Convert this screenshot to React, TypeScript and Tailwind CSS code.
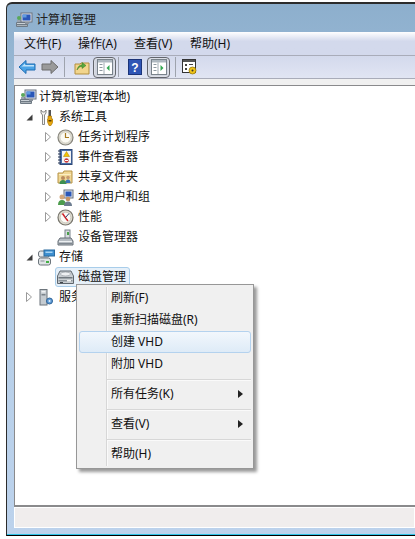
import type { ReactNode } from 'react';

const Computer = () => (
  <svg width="17" height="16" viewBox="0 0 17 16">
    <rect x="1" y="8" width="9" height="3" fill="#9aa3ad" />
    <rect x="0" y="10" width="12" height="5" rx="1" fill="#6f7a84" />
    <rect x="1" y="11" width="10" height="1" fill="#c9d0d6" />
    <rect x="1" y="13" width="10" height="1" fill="#aab2b9" />
    <rect x="5" y="1" width="11" height="9" fill="#dfe4ea" stroke="#6a7380" />
    <rect x="6.5" y="2.5" width="8" height="6" fill="#2a57b8" />
    <rect x="6.5" y="2.5" width="4" height="3" fill="#5f9be0" />
    <rect x="9" y="10" width="4" height="2" fill="#8b939c" />
    <circle cx="3" cy="6" r="2" fill="#5aa85a" />
  </svg>
);

const Tools = () => (
  <svg width="14" height="17" viewBox="0 0 14 17">
    <path d="M2 1v3l1.500 2v9.500h2V6L7 4V1L5.500 3h-2z" fill="#f4f4f4" stroke="#6c6c6c" strokeWidth="0.8" />
    <rect x="9.500" y="1" width="2.500" height="6" fill="#555" />
    <path d="M9 7h3.500v3H14v3l-2 3.500h-2L8.500 13v-3H9z" fill="#e8a80f" stroke="#a36f00" strokeWidth="0.6" />
    <rect x="9.500" y="11" width="3" height="1.500" fill="#5b3d00" />
  </svg>
);

const Clock = () => (
  <svg width="17" height="17" viewBox="0 0 17 17">
    <circle cx="8.500" cy="8.500" r="7.500" fill="#dcdad0" stroke="#87857c" strokeWidth="1.200" />
    <circle cx="8.500" cy="8.500" r="5.500" fill="#fbfaf3" stroke="#c4c1b3" strokeWidth="0.600" />
    <path d="M8.500 4v4.500H12" fill="none" stroke="#a87b20" strokeWidth="1.200" />
  </svg>
);

const EventLog = () => (
  <svg width="15" height="16" viewBox="0 0 15 16">
    <rect x="2" y="0.500" width="12" height="15" fill="#4a6fa8" stroke="#2e4876" />
    <rect x="4" y="2" width="9" height="12" fill="#f4f4f4" />
    <path d="M0 2h3M0 5h3M0 8h3M0 11h3M0 14h3" stroke="#20304f" strokeWidth="1.200" />
    <path d="M8.500 2.500l3 5h-6z" fill="#f2c200" stroke="#a77f00" strokeWidth="0.500" />
    <circle cx="8.500" cy="11.500" r="2.200" fill="#c8383a" />
    <rect x="7" y="11" width="3" height="1" fill="#fff" />
  </svg>
);

const SharedFolder = () => (
  <svg width="17" height="16" viewBox="0 0 17 16">
    <path d="M1 4h5l1-2h8v12H1z" fill="#f0d795" stroke="#b69347" />
    <rect x="2" y="5" width="12" height="1" fill="#fbeec4" />
    <circle cx="6" cy="9" r="2" fill="#b98a5c" />
    <path d="M2.500 15c0-3 1.500-4 3.500-4s3.500 1 3.500 4z" fill="#3d8f4f" />
    <circle cx="11" cy="8.500" r="1.800" fill="#c89a70" />
    <path d="M8.500 14c0-2.500 1-3.500 2.500-3.500s2.500 1 2.500 3.500z" fill="#3f74b8" />
  </svg>
);

const Users = () => (
  <svg width="17" height="17" viewBox="0 0 17 17">
    <rect x="7" y="1" width="9" height="8" fill="#dfe4ea" stroke="#6a7380" />
    <rect x="8.500" y="2.500" width="6" height="5" fill="#2a57b8" />
    <circle cx="5" cy="8" r="2.500" fill="#d4a77a" />
    <path d="M1 16c0-3.500 1.500-5 4-5s4 1.500 4 5z" fill="#4d9c4d" />
    <circle cx="11" cy="10" r="2.300" fill="#c49468" />
    <path d="M7 17c0-3 1.500-4.500 4-4.500s4 1.500 4 4.500z" fill="#6d7d90" />
  </svg>
);

const Gauge = () => (
  <svg width="17" height="17" viewBox="0 0 17 17">
    <circle cx="8.500" cy="8.500" r="7.500" fill="#dedbd0" stroke="#77756c" strokeWidth="1.200" />
    <circle cx="8.500" cy="8.500" r="5.300" fill="#fbfbf7" stroke="#b9b6a8" strokeWidth="0.600" />
    <path d="M5.500 4.500l3.500 5 2 2.500" fill="none" stroke="#d1262a" strokeWidth="1.500" />
    <path d="M12 4.500L8.500 8.500" stroke="#27406f" strokeWidth="1" />
  </svg>
);

const DeviceMgr = () => (
  <svg width="17" height="17" viewBox="0 0 17 17">
    <rect x="8" y="1" width="5" height="9" fill="#d8dce0" stroke="#7b838b" />
    <rect x="10" y="3" width="2" height="3" fill="#4aa04a" />
    <path d="M3 9h11l2 3v4H1v-4z" fill="#b6bcc2" stroke="#666e76" />
    <rect x="2" y="12" width="13" height="1" fill="#eceff1" />
    <rect x="2" y="14" width="13" height="1" fill="#7f878f" />
  </svg>
);

const Storage = () => (
  <svg width="17" height="17" viewBox="0 0 17 17">
    <rect x="0.500" y="2" width="11" height="6" rx="2" fill="#e5e8ea" stroke="#6c757c" />
    <rect x="0.500" y="9" width="12" height="7" rx="2" fill="#dfe3e5" stroke="#6c757c" />
    <rect x="8" y="12" width="3" height="2" fill="#45b045" />
    <rect x="2.500" y="11.500" width="4" height="1" fill="#8a9299" />
    <rect x="6" y="1" width="10.500" height="6" fill="#3d8fd0" stroke="#2b6a9e" />
    <rect x="7.500" y="2.500" width="7" height="1.500" fill="#a6d3f2" />
  </svg>
);

const Disk = () => (
  <svg width="17" height="15" viewBox="0 0 17 15">
    <path d="M3 1h11l2.500 5v7.500H.5V6z" fill="#c9ced2" stroke="#5f676e" />
    <ellipse cx="8.500" cy="4" rx="5" ry="2" fill="#eef0f2" stroke="#8a9198" strokeWidth="0.600" />
    <rect x="1.500" y="7" width="14" height="1.500" fill="#70787f" />
    <rect x="1.500" y="10" width="14" height="1.500" fill="#8d959b" />
    <rect x="10" y="10" width="4" height="1.500" fill="#f4f4f4" />
    <rect x="3" y="12" width="3" height="1" fill="#3d4349" />
  </svg>
);

const Services = () => (
  <svg width="15" height="17" viewBox="0 0 15 17">
    <rect x="1" y="0.500" width="7" height="15.500" fill="#c5cbd0" stroke="#6d757c" />
    <rect x="2.500" y="2" width="4" height="1.500" fill="#f0f2f3" />
    <rect x="2.500" y="5" width="4" height="1.500" fill="#7c848b" />
    <circle cx="10.500" cy="12" r="3" fill="#5e9bd6" stroke="#2f6499" />
    <circle cx="10.500" cy="12" r="1" fill="#e8f1f9" />
  </svg>
);

const OpenArrow = () => (
  <svg width="7" height="7" viewBox="0 0 7 7">
    <path d="M6.500 0.500V6.500H0.500z" fill="#3d3d3d" />
  </svg>
);

const ClosedArrow = () => (
  <svg width="6" height="10" viewBox="0 0 6 10">
    <path d="M0.500 0.500L5.500 5L0.500 9.500z" fill="#fff" stroke="#9a9a9a" />
  </svg>
);

const PaneIcon = ({ right }: { right?: boolean }) => (
  <svg width="16" height="16" viewBox="0 0 16 16">
    <rect x="0.500" y="0.500" width="15" height="15" fill="#fff" stroke="#79838b" />
    <rect x="1" y="1" width="14" height="2.500" fill="#aeb8c0" />
    <rect x="2.500" y="5" width="3" height="1" fill="#8d98a0" />
    <rect x="2.500" y="8" width="3" height="1" fill="#8d98a0" />
    <rect x="2.500" y="11" width="3" height="1" fill="#8d98a0" />
    <path d="M7 3.500V15" stroke="#a2acb3" />
    {right ? <path d="M9.500 6l3 3-3 3z" fill="#34a853" /> : <path d="M12.500 6l-3 3 3 3z" fill="#34a853" />}
  </svg>
);

const ToggleBtn = ({ right }: { right?: boolean }) => (
  <div className="flex h-[21px] w-[23px] items-center justify-center rounded-[4px] border border-[#63666d] bg-[#cfd3de] shadow-[inset_0_0_2px_#ffffff]">
    <PaneIcon right={right} />
  </div>
);

const Sep = () => <div className="h-[20px] w-[1px] bg-[#9ea3ad]" />;

const Row = ({ pad, arrow, icon, text }: { pad: string; arrow?: ReactNode; icon: ReactNode; text: string }) => (
  <div className={`flex h-[20px] items-center whitespace-nowrap ${pad}`}>
    <span className="flex w-[12px] shrink-0 items-center justify-center">{arrow}</span>
    <span className="ml-[2px] flex w-[18px] shrink-0 items-center justify-center">{icon}</span>
    <span className="ml-[4px]">{text}</span>
  </div>
);

const MenuItem = ({ text, active, sub }: { text: string; active?: boolean; sub?: boolean }) => (
  <div className={`flex h-[22px] items-center justify-between rounded-[3px] border pl-[31px] pr-[7px] ${active ? 'border-[#b4d2ee] bg-gradient-to-b from-[#f2f7fc] to-[#deebf7]' : 'border-transparent'}`}>
    <span>{text}</span>
    {sub && (
      <svg width="5" height="8" viewBox="0 0 5 8">
        <path d="M0 0l5 4-5 4z" fill="#222" />
      </svg>
    )}
  </div>
);

const MenuSep = () => <div className="mb-[2px] ml-[28px] mt-[4px] h-[2px] border-t border-[#d7d7d7] bg-[#fafafa]" />;

export default function App() {
  return (
    <div className="h-[539px] w-[415px] overflow-hidden bg-white pb-[3px] pl-[6px] pt-[2px] font-['Noto_Sans','Noto_Sans_CJK_SC',sans-serif] text-[12px] leading-none text-[#111]">
      <div className="relative flex h-full flex-col overflow-hidden rounded-tl-[6px] border-b border-l border-t-2 border-[#2c2c2c] border-b-black bg-gradient-to-b from-[#8dafcd] via-[#b6cfe8] to-[#bcd2ec] pl-[7px]">
        {/* title bar */}
        <div className="flex h-[28px] shrink-0 items-center gap-[3px] pl-[2px] pt-[4px]">
          <Computer />
          <span className="text-[#222]">计算机管理</span>
        </div>

        {/* menu + toolbar */}
        <div className="flex h-[23px] shrink-0 items-center bg-gradient-to-b from-white from-0% to-[#d3d9ec] to-40% pl-[10px] pt-[1px]">
          <span className="w-[54px]">文件(F)</span>
          <span className="w-[56px]">操作(A)</span>
          <span className="w-[56px]">查看(V)</span>
          <span>帮助(H)</span>
        </div>
        <div className="flex h-[24px] shrink-0 items-center border-y border-[#a9acb9] bg-gradient-to-b from-[#d3d9ec] to-[#e1e5f3] pl-[4px]">
          <svg width="18" height="16" viewBox="0 0 18 16" className="mr-[5px]">
            <path d="M1 8l7-6.500V5h9v6H8v3.500z" fill="#4aa3e6" stroke="#1f6db2" />
            <path d="M3 8l4-3.500V6h9v1.500H4z" fill="#bfe3fa" />
          </svg>
          <svg width="18" height="16" viewBox="0 0 18 16" className="mr-[5px]">
            <path d="M17 8l-7-6.500V5H1v6h9v3.500z" fill="#9a9a9a" stroke="#6d6d6d" />
          </svg>
          <Sep />
          <svg width="16" height="16" viewBox="0 0 16 16" className="ml-[9px] mr-[3px]">
            <path d="M1 5h5l1-1h8v11H1z" fill="#f2d58c" stroke="#b38f3e" />
            <path d="M3 11c1-4 3-5 5-5V3.500L12 6.500 8 9.500V7.500c-2 0-3.500 1-5 3.500z" fill="#58a83c" stroke="#3a7a22" strokeWidth="0.500" />
          </svg>
          <ToggleBtn />
          <div className="ml-[2px]"><Sep /></div>
          <svg width="14" height="16" viewBox="0 0 14 16" className="ml-[9px] mr-[5px]">
            <rect x="0.500" y="0.500" width="13" height="15" fill="#2f55b5" stroke="#1c3479" />
            <text x="7" y="12.500" textAnchor="middle" fontSize="12" fontWeight="700" fill="#fff" fontFamily="Liberation Sans">?</text>
          </svg>
          <ToggleBtn right />
          <div className="ml-[5px]"><Sep /></div>
          <svg width="16" height="16" viewBox="0 0 16 16" className="ml-[6px]">
            <rect x="0.500" y="0.500" width="13" height="13" fill="#fff" stroke="#333" />
            <rect x="1" y="1" width="12" height="2" fill="#555" />
            <path d="M3 5h2v2H3zM7 5h4v1H7zM3 9h2v2H3z" fill="#444" />
            <circle cx="10.500" cy="11.500" r="3.500" fill="#f0c419" stroke="#8a6d00" strokeWidth="0.700" />
            <circle cx="10.500" cy="11.500" r="1" fill="#333" />
          </svg>
        </div>
        <div className="h-[6px] shrink-0 bg-[#f0f0f0]" />

        {/* tree */}
        <div className="min-h-0 flex-1 border-b-2 border-l border-t border-[#8a8a8c] bg-white pl-[1px] pt-[1px]">
          <div className="flex h-[20px] items-center gap-[2px] whitespace-nowrap pl-[4px]">
            <Computer />
            <span>计算机管理(本地)</span>
          </div>
          <Row pad="pl-[7px]" arrow={<OpenArrow />} icon={<Tools />} text="系统工具" />
          <Row pad="pl-[26px]" arrow={<ClosedArrow />} icon={<Clock />} text="任务计划程序" />
          <Row pad="pl-[26px]" arrow={<ClosedArrow />} icon={<EventLog />} text="事件查看器" />
          <Row pad="pl-[26px]" arrow={<ClosedArrow />} icon={<SharedFolder />} text="共享文件夹" />
          <Row pad="pl-[26px]" arrow={<ClosedArrow />} icon={<Users />} text="本地用户和组" />
          <Row pad="pl-[26px]" arrow={<ClosedArrow />} icon={<Gauge />} text="性能" />
          <Row pad="pl-[26px]" icon={<DeviceMgr />} text="设备管理器" />
          <Row pad="pl-[7px]" arrow={<OpenArrow />} icon={<Storage />} text="存储" />
          <div className="ml-[39px] flex h-[20px] w-[75px] items-center gap-[4px] rounded-[3px] border border-[#a8cdea] bg-[#e6f0f9] pl-[1px]">
            <Disk />
            <span>磁盘管理</span>
          </div>
          <Row pad="pl-[7px]" arrow={<ClosedArrow />} icon={<Services />} text="服务" />
        </div>

        {/* status bar */}
        <div className="mb-[7px] h-[21px] shrink-0 border border-white bg-[#f0eded]" />
        <div className="absolute inset-x-0 bottom-0 h-[1px] bg-[#2fc3e6]" />

        {/* context menu */}
        <div className="absolute left-[69px] top-[280px] w-[178px] border border-[#979797] bg-[#f0f0f0] px-[2px] pb-[3px] pt-[2px] shadow-[3px_3px_3px_rgba(0,0,0,0.4)]">
          <div className="absolute bottom-[2px] left-[29px] top-[2px] w-[2px] border-l border-[#d7d7d7] bg-[#fafafa]" />
          <div className="relative">
            <MenuItem text="刷新(F)" />
            <MenuItem text="重新扫描磁盘(R)" />
            <MenuItem text="创建 VHD" active />
            <MenuItem text="附加 VHD" />
            <MenuSep />
            <MenuItem text="所有任务(K)" sub />
            <MenuSep />
            <MenuItem text="查看(V)" sub />
            <MenuSep />
            <MenuItem text="帮助(H)" />
          </div>
        </div>
      </div>
    </div>
  );
}
